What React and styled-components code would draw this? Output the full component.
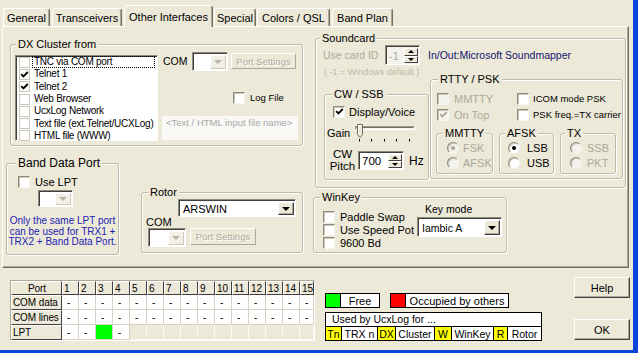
import React from 'react';
import styled, { createGlobalStyle } from 'styled-components';

const FACE = '#ECE9D8';
const SHADOW = '#ACA899';
const DARK = '#716F64';
const GREY_TEXT = '#ACA899';
const FRAME = '#0B44D8';

const GlobalStyle = createGlobalStyle`
	* { box-sizing: border-box; }
	html, body { margin: 0; padding: 0; background: ${FACE}; }
	body {
		font-family: "Liberation Sans", Arial, sans-serif;
		font-size: 11px;
		color: #000;
	}
`;

//window + tabs
const Window = styled.div`
	width: 638px;
	height: 353px;
	background: ${FACE};
	border-right: 5px solid ${FRAME};
	border-bottom: 3px solid ${FRAME};
	display: flex;
	flex-direction: column;
	overflow: hidden;
`;

const TabStrip = styled.div`
	display: flex;
	align-items: flex-end;
	height: 26px;
	padding-left: 3px;
	position: relative;
	z-index: 1;
`;

const Tab = styled.div`
	flex: none;
	width: ${(p) => p.$w}px;
	margin-right: ${(p) => p.$gap}px;
	height: ${(p) => (p.$active ? 22 : 18)}px;
	margin-bottom: ${(p) => (p.$active ? -1 : 0)}px;
	padding-top: ${(p) => (p.$active ? 0 : 1)}px;
	display: flex;
	align-items: center;
	justify-content: center;
	background: ${FACE};
	border-top: 1px solid #fff;
	border-left: 1px solid #fff;
	border-right: 1px solid ${DARK};
	box-shadow: inset -1px 0 0 ${SHADOW};
	border-radius: 3px 3px 0 0;
	white-space: nowrap;
`;

const Panel = styled.div`
	margin-left: 2px;
	width: 627px;
	height: 242px;
	flex: none;
	border-top: 1px solid #fff;
	border-left: 1px solid #fff;
	border-right: 1px solid ${DARK};
	border-bottom: 1px solid ${DARK};
	box-shadow: inset -1px -1px 0 ${SHADOW};
	display: flex;
`;

const LeftCol = styled.div`
	width: 300px;
	flex: none;
	display: flex;
	flex-direction: column;
`;

const RightCol = styled.div`
	margin-left: 10px;
	display: flex;
	flex-direction: column;
`;

const Row = styled.div`
	display: flex;
	align-items: flex-start;
	margin: ${(p) => p.$m || '0'};
`;

const Col = styled.div`
	display: flex;
	flex-direction: column;
	flex: none;
	width: ${(p) => (p.$w ? `${p.$w}px` : 'auto')};
	margin: ${(p) => p.$m || '0'};
`;

//group box
const Group = styled.div`
	flex: none;
	width: ${(p) => p.$w}px;
	height: ${(p) => p.$h}px;
	margin: ${(p) => p.$m || '0'};
	border: 1px solid #BDBAA9;
	border-radius: 3px;
	box-shadow: inset 1px 1px 0 #fff, 1px 1px 0 #fff;
	display: flex;
	flex-direction: column;
`;

const GroupTitle = styled.div`
	align-self: flex-start;
	margin: -7px 0 0 ${(p) => p.$indent - 3}px;
	padding: 0 2px;
	height: 13px;
	line-height: 13px;
	font-size: ${(p) => p.$fs || 11}px;
	background: ${FACE};
	white-space: nowrap;
`;

//controls
const CheckBox = styled.span`
	flex: none;
	width: ${(p) => p.$size || 12}px;
	height: ${(p) => p.$size || 12}px;
	display: inline-flex;
	align-items: center;
	justify-content: center;
	background: ${(p) => (p.$disabled ? '#F3F2EC' : '#fff')};
	border: 1px solid;
	border-color: ${(p) => (p.$flat ? '#CBC8B9' : '#8D8A7A #F6F5F0 #F6F5F0 #8D8A7A')};
	box-shadow: ${(p) => (p.$flat ? 'none' : 'inset 1px 1px 0 #CBC8B9')};
`;

const Check = ({ on, disabled, flat, size }) => (
	<CheckBox $disabled={disabled} $flat={flat} $size={size}>
		{on && (
			<svg width="9" height="9" viewBox="0 0 9 9">
				<path
					d="M1.2 4.2 L3.4 6.4 L7.8 2"
					fill="none"
					stroke={disabled ? GREY_TEXT : '#000'}
					strokeWidth="1.8"
				/>
			</svg>
		)}
	</CheckBox>
);

const CheckRow = styled.div`
	display: flex;
	align-items: center;
	gap: ${(p) => p.$gap ?? 5}px;
	height: 13px;
	flex: none;
	margin: ${(p) => p.$m || '0'};
	font-size: ${(p) => p.$fs || 11}px;
	color: ${(p) => (p.$disabled ? GREY_TEXT : '#000')};
	white-space: nowrap;
`;

const RadioCircle = styled.span`
	flex: none;
	width: 12px;
	height: 12px;
	border-radius: 50%;
	background: ${(p) => (p.$disabled ? '#F3F2EC' : '#fff')};
	border: 1px solid;
	border-color: #8D8A7A #F6F5F0 #F6F5F0 #8D8A7A;
	box-shadow: inset 1px 1px 0 #CBC8B9;
	display: flex;
	align-items: center;
	justify-content: center;

	&::after {
		content: '';
		display: ${(p) => (p.$on ? 'block' : 'none')};
		width: 4px;
		height: 4px;
		border-radius: 50%;
		background: ${(p) => (p.$disabled ? GREY_TEXT : '#000')};
	}
`;

const RadioRow = styled.div`
	display: flex;
	align-items: center;
	gap: ${(p) => p.$gap}px;
	height: 12px;
	margin: ${(p) => p.$m || '0'};
	color: ${(p) => (p.$disabled ? GREY_TEXT : '#000')};
	white-space: nowrap;
`;

const Combo = styled.div`
	flex: none;
	width: ${(p) => p.$w}px;
	height: ${(p) => p.$h}px;
	margin: ${(p) => p.$m || '0'};
	background: #fff;
	border: 1px solid;
	border-color: #8D8A7A #fff #fff #8D8A7A;
	box-shadow: inset 1px 1px 0 #404040;
	padding: 2px 1px 1px 2px;
	display: flex;
`;

const ComboValue = styled.span`
	flex: 1;
	display: flex;
	align-items: center;
	padding-left: 2px;
	font-size: ${(p) => p.$fs || 11}px;
	white-space: nowrap;
`;

const DropButton = styled.span`
	flex: none;
	width: 16px;
	background: ${(p) => (p.$disabled ? '#F1EFE6' : FACE)};
	border: 1px solid;
	border-color: ${(p) => (p.$disabled ? '#fff #CBC8B9 #CBC8B9 #fff' : '#fff #404040 #404040 #fff')};
	box-shadow: ${(p) => (p.$disabled ? 'none' : `inset -1px -1px 0 ${SHADOW}`)};
	display: flex;
	align-items: center;
	justify-content: center;

	&::after {
		content: '';
		border-left: 4px solid transparent;
		border-right: 4px solid transparent;
		border-top: 4px solid ${(p) => (p.$disabled ? '#B8B5A5' : '#000')};
	}
`;

const ComboBox = ({ w, h, m, value, fs, disabled }) => (
	<Combo $w={w} $h={h} $m={m}>
		<ComboValue $fs={fs}>{value}</ComboValue>
		<DropButton $disabled={disabled} />
	</Combo>
);

const SpinField = styled.div`
	flex: none;
	width: ${(p) => p.$w}px;
	height: ${(p) => p.$h}px;
	background: ${(p) => (p.$disabled ? '#F3F2EC' : '#fff')};
	border: 1px solid;
	border-color: #8D8A7A #fff #fff #8D8A7A;
	box-shadow: inset 1px 1px 0 #404040;
	padding: 2px 1px 1px 2px;
	display: flex;
`;

const SpinValue = styled.span`
	flex: 1;
	display: flex;
	align-items: center;
	padding-left: 1px;
	font-size: ${(p) => p.$fs || 11}px;
	color: ${(p) => (p.$disabled ? GREY_TEXT : '#000')};
`;

const SpinArrows = styled.span`
	flex: none;
	width: 14px;
	display: flex;
	flex-direction: column;
`;

const SpinArrow = styled.span`
	flex: 1;
	background: ${FACE};
	border: 1px solid;
	border-color: #fff #404040 #404040 #fff;
	display: flex;
	align-items: center;
	justify-content: center;

	&::after {
		content: '';
		border-left: 3px solid transparent;
		border-right: 3px solid transparent;
		${(p) => (p.$up ? 'border-bottom' : 'border-top')}: 3px solid #000;
	}
`;

const Spinner = ({ w, h, value, disabled, fs }) => (
	<SpinField $w={w} $h={h} $disabled={disabled}>
		<SpinValue $disabled={disabled} $fs={fs}>{value}</SpinValue>
		<SpinArrows>
			<SpinArrow $up />
			<SpinArrow />
		</SpinArrows>
	</SpinField>
);

const Button = styled.div`
	flex: none;
	width: ${(p) => p.$w}px;
	height: ${(p) => p.$h}px;
	margin: ${(p) => p.$m || '0'};
	display: flex;
	align-items: center;
	justify-content: center;
	background: ${FACE};
	border: 1px solid;
	border-color: ${(p) => (p.$disabled ? `#fff ${SHADOW} ${SHADOW} #fff` : '#fff #404040 #404040 #fff')};
	box-shadow: ${(p) => (p.$disabled ? 'none' : `inset -1px -1px 0 ${SHADOW}`)};
	color: ${(p) => (p.$disabled ? GREY_TEXT : '#000')};
	text-shadow: ${(p) => (p.$disabled ? '1px 1px 0 #fff' : 'none')};
	font-size: ${(p) => p.$fs || 11}px;
	white-space: nowrap;
`;

const Text = styled.div`
	flex: none;
	margin: ${(p) => p.$m || '0'};
	width: ${(p) => (p.$w ? `${p.$w}px` : 'auto')};
	font-size: ${(p) => p.$fs || 11}px;
	line-height: ${(p) => p.$lh || 12}px;
	color: ${(p) => p.$color || '#000'};
	text-align: ${(p) => p.$align || 'left'};
	white-space: nowrap;
`;

//dx cluster list
const DXList = styled.div`
	flex: none;
	width: 143px;
	height: 86px;
	margin: 4px 0 0 4px;
	background: #fff;
	border: 1px solid;
	border-color: #8D8A7A #fff #fff #8D8A7A;
	box-shadow: inset 1px 1px 0 #404040;
`;

const ListItem = styled.div`
	display: flex;
	align-items: center;
	height: 12.3px;
	padding-left: 3px;
	font-size: 10px;
	letter-spacing: -0.25px;
	white-space: nowrap;
`;

const ListText = styled.span`
	flex: 1;
	margin: 0 2px 0 2px;
	padding: 0 1px;
	line-height: 10px;
	border: 1px dotted ${(p) => (p.$focus ? '#000' : 'transparent')};
`;

const FileInput = styled.div`
	flex: none;
	width: 136px;
	height: 24px;
	margin-top: 12px;
	background: #F9F9F6;
	padding: 1px 4px;
	font-size: 9.5px;
	line-height: 11px;
	color: #A8A8A8;
	white-space: nowrap;
`;

const BandNote = styled.div`
	margin-top: 9px;
	font-size: 10px;
	line-height: 10.5px;
	text-align: center;
	color: #2222B4;
`;

//port table
const PortGrid = styled.div`
	flex: none;
	display: grid;
	grid-template-columns: 51px repeat(14, 17px) 14px;
	grid-template-rows: 14px 15px 15px 15px;
	border-top: 1px solid ${SHADOW};
	border-left: 1px solid ${SHADOW};
	border-right: 1px solid #fff;
	border-bottom: 1px solid #fff;
	font-size: 10px;
	letter-spacing: -0.1px;
`;

const cellLook = {
	fixed: `background: ${FACE}; border-top: 1px solid #fff; border-left: 1px solid #fff; border-right: 1px solid #404040; border-bottom: 1px solid #404040; padding-left: 1px;`,
	data: `background: #fff; border-right: 1px solid #D6D3C6; border-bottom: 1px solid #D6D3C6; padding-left: 5px;`,
	blank: `background: ${FACE}; border-right: 1px solid #FAF9F4; border-bottom: 1px solid #FAF9F4;`,
	green: `background: #00FF00; border-right: 1px solid #D6D3C6; border-bottom: 1px solid #D6D3C6;`,
};

const Cell = styled.div`
	display: flex;
	align-items: center;
	justify-content: ${(p) => (p.$center ? 'center' : 'flex-start')};
	white-space: nowrap;
	overflow: hidden;
	${(p) => cellLook[p.$kind]}
`;

//legend
const Legend = styled.div`
	flex: none;
	margin: 13px 0 0 10px;
	display: flex;
	flex-direction: column;
`;

const KeyBox = styled.div`
	flex: none;
	display: flex;
	width: ${(p) => p.$w}px;
	height: 15px;
	margin-left: ${(p) => p.$ml || 0}px;
	border: 1px solid #000;
	background: #fff;
`;

const Swatch = styled.span`
	width: 15px;
	flex: none;
	background: ${(p) => p.$color};
	border-right: 1px solid #000;
`;

const KeyText = styled.span`
	flex: 1;
	display: flex;
	align-items: center;
	justify-content: center;
	white-space: nowrap;
`;

const UsedBox = styled.div`
	margin-top: 4px;
	width: 217px;
	height: 29px;
	border: 1px solid #000;
	background: #fff;
	display: flex;
	flex-direction: column;
`;

const UsedHead = styled.div`
	height: 14px;
	border-bottom: 1px solid #000;
	padding-left: 6px;
	line-height: 13px;
	font-size: 10.5px;
`;

const UsedRow = styled.div`
	height: 13px;
	display: flex;
`;

const UsedCell = styled.span`
	flex: ${(p) => (p.$w ? `none` : '1')};
	width: ${(p) => (p.$w ? `${p.$w}px` : 'auto')};
	background: ${(p) => (p.$key ? '#FFFF00' : '#fff')};
	border-right: ${(p) => (p.$last ? 'none' : '1px solid #000')};
	display: flex;
	align-items: center;
	justify-content: center;
	font-size: 10.5px;
	white-space: nowrap;
`;

const ButtonCol = styled.div`
	margin: -3px 3px 0 auto;
	display: flex;
	flex-direction: column;
`;

const GainSlider = () => (
	<svg width="64" height="18" viewBox="0 0 64 18" style={{ flex: 'none' }}>
		<rect x="2.5" y="2.5" width="59" height="3" fill="#F4F3EE" />
		<path d="M2.5 5.5 V2.5 H61.5" stroke="#9D9A8A" fill="none" />
		<path d="M3.5 4.5 V3.5 H60.5" stroke={DARK} fill="none" />
		<path d="M2.5 5.5 H61.5 V2.5" stroke="#fff" fill="none" />
		<path d="M4.5 0.5 H9.5 V10.5 L7 13.5 L4.5 10.5 Z" fill={FACE} stroke={DARK} />
		<path d="M5.5 10 V1.5 H8.5" stroke="#fff" fill="none" />
		{[6.5, 18.5, 31.5, 43.5, 56.5].map((x) => (
			<line key={x} x1={x} y1="15" x2={x} y2="17.5" stroke="#000" />
		))}
	</svg>
);

const tabs = [
	{ t: 'General', w: 47, g: 2 },
	{ t: 'Transceivers', w: 70, g: 2 },
	{ t: 'Other Interfaces', w: 89, g: 1, active: true },
	{ t: 'Special', w: 42, g: 1 },
	{ t: 'Colors / QSL', w: 73, g: 2 },
	{ t: 'Band Plan', w: 61, g: 0 },
];

const dxSources = [
	['TNC via COM port', false],
	['Telnet 1', true],
	['Telnet 2', true],
	['Web Browser', false],
	['UcxLog Network', false],
	['Text file (ext.Telnet/UCXLog)', false],
	['HTML file (WWW)', false],
];

const ports = Array.from({ length: 15 }, (_, i) => i + 1);

function lptCell(n) {
	if (n === 3) return 'green';
	if (n > 4) return 'blank';
	return 'data';
}

function App() {
	return (
		<Window>
			<GlobalStyle />
			<TabStrip>
				{tabs.map((tab) => (
					<Tab key={tab.t} $w={tab.w} $gap={tab.g} $active={tab.active}>
						{tab.t}
					</Tab>
				))}
			</TabStrip>

			<Panel>
				<LeftCol>
					<Group $w={293} $h={102} $m="17px 0 0 7px">
						<GroupTitle $indent={8}>DX Cluster from</GroupTitle>
						<Row>
							<DXList>
								{dxSources.map(([label, on], i) => (
									<ListItem key={label}>
										<Check on={on} flat size={11} />
										<ListText $focus={i === 0}>{label}</ListText>
									</ListItem>
								))}
							</DXList>
							<Col $w={136} $m="1px 0 0 4px">
								<Row>
									<Text $w={29} $m="0 0 0 1px" $fs={10.5} $lh={19}>
										COM
									</Text>
									<ComboBox w={36} h={19} disabled />
									<Button $w={65} $h={16} $m="1px 0 0 3px" $fs={9.5} $disabled>
										Port Settings
									</Button>
								</Row>
								<CheckRow $m="20px 0 0 71px" $fs={9.5}>
									<Check />
									<span>Log File</span>
								</CheckRow>
								<FileInput>&lt;Text / HTML input file name&gt;</FileInput>
							</Col>
						</Row>
					</Group>

					<Row $m="17px 0 0 3px">
						<Group $w={113} $h={92}>
							<GroupTitle $indent={12} $fs={12}>
								Band Data Port
							</GroupTitle>
							<CheckRow $m="5px 0 0 11px">
								<Check />
								<span>Use LPT</span>
							</CheckRow>
							<ComboBox w={35} h={17} m="2px 0 0 31px" disabled />
							<BandNote>
								Only the same LPT port
								<br />
								can be used for TRX1 +
								<br />
								TRX2 + Band Data Port.
							</BandNote>
						</Group>

						<Group $w={162} $h={61} $m="29px 0 0 22px">
							<GroupTitle $indent={9}>Rotor</GroupTitle>
							<ComboBox w={118} h={18} m="0 0 0 36px" value="ARSWIN" />
							<Text $m="-1px 0 0 4px">COM</Text>
							<Row $m="0 0 0 6px">
								<ComboBox w={38} h={19} disabled />
								<Button $w={66} $h={17} $m="0 0 0 4px" $fs={9.5} $disabled>
									Port Settings
								</Button>
							</Row>
						</Group>
					</Row>
				</LeftCol>

				<RightCol>
					<Group $w={311} $h={150} $m="11px 0 0 2px">
						<GroupTitle $indent={7}>Soundcard</GroupTitle>
						<Row $m="0 0 0 7px">
							<Text $w={62} $fs={10.5} $lh={20} $color={GREY_TEXT}>
								Use card ID
							</Text>
							<Spinner w={35} h={20} value="-1" disabled />
							<Text $m="0 0 0 8px" $fs={10.5} $lh={20} $color="#14146E">
								In/Out:Microsoft Soundmapper
							</Text>
						</Row>
						<Row $m="1px 0 0 0">
							<Col $w={105} $m="0 0 0 8px">
								<Text $fs={9} $color="#BDBAAA">
									( -1 = Windows default )
								</Text>
								<Group $w={105} $h={86} $m="16px 0 0 0">
									<GroupTitle $indent={10}>CW / SSB</GroupTitle>
									<CheckRow $m="4px 0 0 8px" $gap={4}>
										<Check on />
										<span>Display/Voice</span>
									</CheckRow>
									<Row $m="6px 0 0 2px">
										<Text $w={26} $lh={18}>
											Gain
										</Text>
										<GainSlider />
									</Row>
									<Row $m="6px 0 0 2px">
										<Col $w={31}>
											<Text $fs={11.5} $lh={12} $align="center">
												CW
											</Text>
											<Text $fs={11.5} $lh={12} $align="center">
												Pitch
											</Text>
										</Col>
										<Row $m="3px 0 0 0">
											<Spinner w={46} h={19} value="700" fs={11.5} />
										</Row>
										<Text $m="7px 0 0 5px" $fs={12}>
											Hz
										</Text>
									</Row>
								</Group>
							</Col>

							<Group $w={193} $h={100} $m="13px 0 0 1px">
								<GroupTitle $indent={10}>RTTY / PSK</GroupTitle>
								<Row $m="6px 0 0 6px">
									<Col $w={80}>
										<CheckRow $disabled>
											<Check disabled />
											<span>MMTTY</span>
										</CheckRow>
										<CheckRow $m="3px 0 0 0" $disabled>
											<Check on disabled />
											<span>On Top</span>
										</CheckRow>
									</Col>
									<Col>
										<CheckRow $fs={9.5} $gap={4}>
											<Check />
											<span>ICOM mode PSK</span>
										</CheckRow>
										<CheckRow $m="3px 0 0 0" $fs={9.5} $gap={4}>
											<Check />
											<span>PSK freq.=TX carrier</span>
										</CheckRow>
									</Col>
								</Row>
								<Row $m="12px 0 0 0">
									<Group $w={57} $h={41} $m="0 0 0 5px">
										<GroupTitle $indent={9}>MMTTY</GroupTitle>
										<RadioRow $m="2px 0 0 10px" $gap={4} $disabled>
											<RadioCircle $on $disabled />
											<span>FSK</span>
										</RadioRow>
										<RadioRow $m="3px 0 0 10px" $gap={4} $disabled>
											<RadioCircle $disabled />
											<span>AFSK</span>
										</RadioRow>
									</Group>
									<Group $w={55} $h={41} $m="0 0 0 6px">
										<GroupTitle $indent={8}>AFSK</GroupTitle>
										<RadioRow $m="2px 0 0 8px" $gap={7}>
											<RadioCircle $on />
											<span>LSB</span>
										</RadioRow>
										<RadioRow $m="3px 0 0 8px" $gap={7}>
											<RadioCircle />
											<span>USB</span>
										</RadioRow>
									</Group>
									<Group $w={56} $h={41} $m="0 0 0 6px">
										<GroupTitle $indent={7}>TX</GroupTitle>
										<RadioRow $m="2px 0 0 9px" $gap={5} $disabled>
											<RadioCircle $disabled />
											<span>SSB</span>
										</RadioRow>
										<RadioRow $m="3px 0 0 9px" $gap={5} $disabled>
											<RadioCircle $disabled />
											<span>PKT</span>
										</RadioRow>
									</Group>
								</Row>
							</Group>
						</Row>
					</Group>

					<Group $w={194} $h={56} $m="9px 0 0 0">
						<GroupTitle $indent={9}>WinKey</GroupTitle>
						<Row>
							<Col $w={94} $m="6px 0 0 9px">
								<CheckRow>
									<Check />
									<span>Paddle Swap</span>
								</CheckRow>
								<CheckRow>
									<Check />
									<span>Use Speed Pot</span>
								</CheckRow>
								<CheckRow>
									<Check />
									<span>9600 Bd</span>
								</CheckRow>
							</Col>
							<Col $m="-1px 0 0 0">
								<Text $m="0 0 0 8px" $fs={10.5}>
									Key mode
								</Text>
								<ComboBox w={85} h={20} m="2px 0 0 0" value="Iambic A" fs={10.5} />
							</Col>
						</Row>
					</Group>
				</RightCol>
			</Panel>

			<Row $m="12px 0 0 10px">
				<PortGrid>
					<Cell $kind="fixed" $center>
						Port
					</Cell>
					{ports.map((n) => (
						<Cell key={`h${n}`} $kind="fixed">
							{n}
						</Cell>
					))}
					<Cell $kind="fixed">COM data</Cell>
					{ports.map((n) => (
						<Cell key={`d${n}`} $kind="data">
							-
						</Cell>
					))}
					<Cell $kind="fixed">COM lines</Cell>
					{ports.map((n) => (
						<Cell key={`l${n}`} $kind="data">
							-
						</Cell>
					))}
					<Cell $kind="fixed">LPT</Cell>
					{ports.map((n) => (
						<Cell key={`p${n}`} $kind={lptCell(n)}>
							{lptCell(n) === 'data' ? '-' : ''}
						</Cell>
					))}
				</PortGrid>

				<Legend>
					<Row>
						<KeyBox $w={55}>
							<Swatch $color="#00FF00" />
							<KeyText>Free</KeyText>
						</KeyBox>
						<KeyBox $w={119} $ml={10}>
							<Swatch $color="#FF0000" />
							<KeyText>Occupied by others</KeyText>
						</KeyBox>
					</Row>
					<UsedBox>
						<UsedHead>Used by UcxLog for ...</UsedHead>
						<UsedRow>
							<UsedCell $w={16} $key>Tn</UsedCell>
							<UsedCell $w={36}>TRX n</UsedCell>
							<UsedCell $w={18} $key>DX</UsedCell>
							<UsedCell $w={39}>Cluster</UsedCell>
							<UsedCell $w={17} $key>W</UsedCell>
							<UsedCell $w={42}>WinKey</UsedCell>
							<UsedCell $w={14} $key>R</UsedCell>
							<UsedCell $last>Rotor</UsedCell>
						</UsedRow>
					</UsedBox>
				</Legend>

				<ButtonCol>
					<Button $w={56} $h={21}>
						Help
					</Button>
					<Button $w={56} $h={21} $m="21px 0 0 0">
						OK
					</Button>
				</ButtonCol>
			</Row>
		</Window>
	);
}

export default App;
